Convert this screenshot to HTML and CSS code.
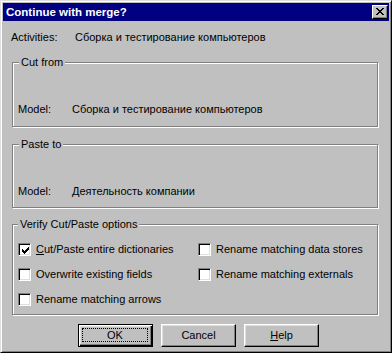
FILE: index.html
```html
<!DOCTYPE html>
<html>
    <head>
        <meta charset="utf-8">
        <title>Continue with merge?</title>
        <link rel="stylesheet" href="styles.css">
    </head>
    <body>
        <div class="dialog">
            <div class="titlebar">
                <span class="title">Continue with merge?</span>
                <span class="close-btn">
                    <svg width="8" height="7" viewBox="0 0 8 7" shape-rendering="crispEdges">
                        <path d="M0 0h2v1h-2z M6 0h2v1h-2z M1 1h2v1h-2z M5 1h2v1h-2z M2 2h4v1h-4z M3 3h2v1h-2z M2 4h4v1h-4z M1 5h2v1h-2z M5 5h2v1h-2z M0 6h2v1h-2z M6 6h2v1h-2z" fill="#000"/>
                    </svg>
                </span>
            </div>
            <div class="content">
                <div class="row activities">
                    <span class="label wide">Activities:</span>
                    <span>Сборка и тестирование компьютеров</span>
                </div>

                <div class="group group-cut">
                    <span class="group-title">Cut from</span>
                    <div class="row">
                        <span class="label">Model:</span>
                        <span>Сборка и тестирование компьютеров</span>
                    </div>
                </div>

                <div class="group group-paste">
                    <span class="group-title">Paste to</span>
                    <div class="row">
                        <span class="label">Model:</span>
                        <span>Деятельность компании</span>
                    </div>
                </div>

                <div class="group group-options">
                    <span class="group-title">Verify Cut/Paste options</span>
                    <div class="options">
                        <div class="check">
                            <span class="box">
                                <svg width="7" height="7" viewBox="0 0 7 7" shape-rendering="crispEdges">
                                    <path d="M6 0h1v1h-1z M5 1h2v1h-2z M0 2h1v1h-1z M4 2h3v1h-3z M0 3h2v1h-2z M3 3h3v1h-3z M0 4h5v1h-5z M1 5h3v1h-3z M2 6h1v1h-1z" fill="#000"/>
                                </svg>
                            </span>
                            <span><u>C</u>ut/Paste entire dictionaries</span>
                        </div>
                        <div class="check">
                            <span class="box"></span>
                            <span>Rename matching data stores</span>
                        </div>
                        <div class="check">
                            <span class="box"></span>
                            <span>Overwrite existing fields</span>
                        </div>
                        <div class="check">
                            <span class="box"></span>
                            <span>Rename matching externals</span>
                        </div>
                        <div class="check">
                            <span class="box"></span>
                            <span>Rename matching arrows</span>
                        </div>
                    </div>
                </div>

                <div class="buttons">
                    <div class="btn btn-default"><span class="focus">OK</span></div>
                    <div class="btn">Cancel</div>
                    <div class="btn"><u>H</u>elp</div>
                </div>
            </div>
        </div>
    </body>
</html>
```

FILE: styles.css
```css
body{
    margin: 0;
    background-color: #c0c0c0;
    font-family: "Liberation Sans", Arial, sans-serif;
    font-size: 11px;
    line-height: 13px;
    color: #000;
}
.dialog{
    width: 392px;
    height: 353px;
    box-sizing: border-box;
    border: 1px solid;
    border-color: #dfdfdf #000 #000 #dfdfdf;
    box-shadow: inset 1px 1px #fff, inset -1px -1px #808080;
    padding: 2px;
    background-color: #c0c0c0;
}
.titlebar{
    height: 18px;
    background-color: #000080;
    display: flex;
    align-items: center;
    padding: 0 1px 0 3px;
}
.title{
    flex: 1;
    color: #fff;
    font-weight: bold;
    font-size: 11.5px;
}
.close-btn{
    width: 16px;
    height: 14px;
    box-sizing: border-box;
    border: 1px solid;
    border-color: #fff #000 #000 #fff;
    box-shadow: inset -1px -1px #808080;
    background-color: #c0c0c0;
    display: flex;
    align-items: center;
    justify-content: center;
    padding: 0 1px 1px 0;
}
.close-btn svg{
    display: block;
}
.row{
    display: flex;
    height: 13px;
    white-space: nowrap;
}
.activities{
    margin: 10px 0 0 8px;
}
.label{
    width: 54px;
    flex: none;
}
.label.wide{
    width: 64px;
}
.group{
    position: relative;
    border: 1px solid #808080;
    box-shadow: 1px 1px 0 #fff, inset 1px 1px 0 #fff;
    margin: 0 11px 0 9px;
    padding: 0 5px;
}
.group-title{
    position: absolute;
    top: -7px;
    left: 6px;
    padding: 0 2px;
    background-color: #c0c0c0;
    white-space: nowrap;
}
.group-cut{
    margin-top: 18px;
    padding-top: 40px;
    padding-bottom: 10px;
}
.group-paste{
    margin-top: 17px;
    padding-top: 40px;
    padding-bottom: 9px;
}
.group-options{
    margin-top: 16px;
    padding-top: 18px;
    padding-bottom: 8px;
}
.group-options .group-title{
    left: 5px;
}
.options{
    display: grid;
    grid-template-columns: 180px 1fr;
    grid-auto-rows: 13px;
    row-gap: 12px;
}
.check{
    display: flex;
    align-items: center;
    white-space: nowrap;
}
.box{
    width: 13px;
    height: 13px;
    box-sizing: border-box;
    border: 1px solid;
    border-color: #808080 #fff #fff #808080;
    box-shadow: inset 1px 1px #000, inset -1px -1px #dfdfdf;
    background-color: #fff;
    margin-right: 5px;
    display: flex;
    align-items: center;
    justify-content: center;
    flex: none;
}
.box svg{
    display: block;
    margin: 1px 0 0 1px;
}
.buttons{
    display: flex;
    gap: 8px;
    margin: 9px 0 0 75px;
}
.btn{
    width: 75px;
    height: 23px;
    box-sizing: border-box;
    border: 1px solid;
    border-color: #fff #000 #000 #fff;
    box-shadow: inset -1px -1px #808080, inset 1px 1px #dfdfdf;
    display: flex;
    align-items: center;
    justify-content: center;
    padding-bottom: 1px;
}
.btn-default{
    border-color: #000;
    box-shadow: inset 1px 1px #fff, inset -1px -1px #000, inset -2px -2px #808080, inset 2px 2px #dfdfdf;
    padding: 3px 4px 4px 3px;
}
.focus{
    flex: 1;
    align-self: stretch;
    border: 1px dotted #000;
    display: flex;
    align-items: center;
    justify-content: center;
}
```
